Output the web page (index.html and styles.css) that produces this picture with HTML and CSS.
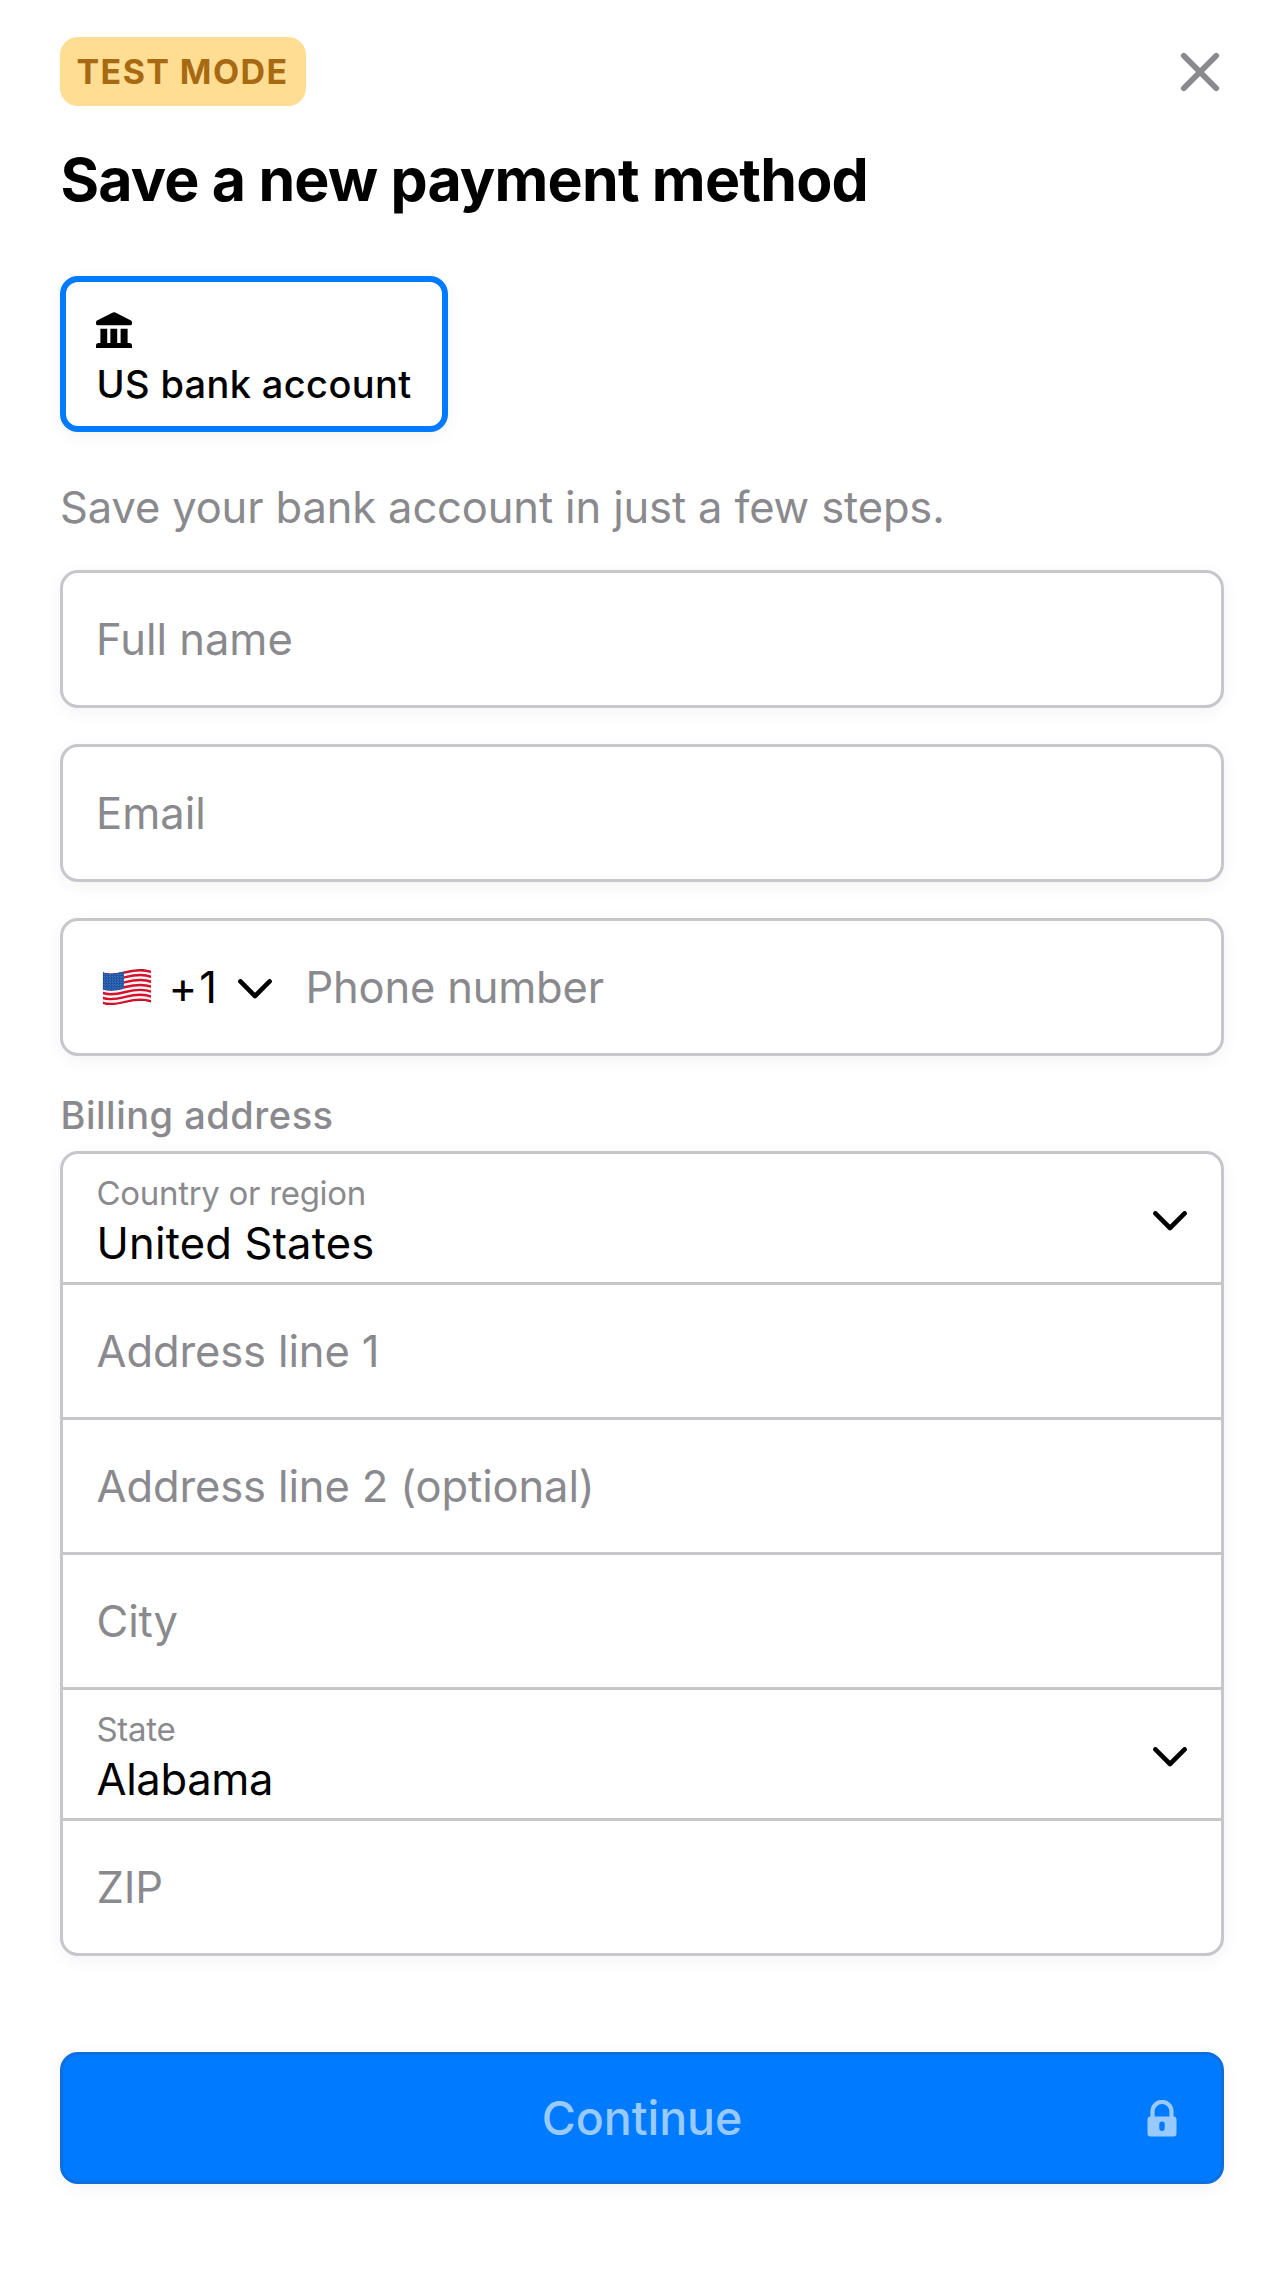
FILE: index.html
```html
<!DOCTYPE html>
<html lang="en">
<head>
<meta charset="utf-8">
<title>Save a new payment method</title>
<link rel="stylesheet" href="styles.css">
</head>
<body>
<main class="sheet">
  <header class="header">
    <span class="badge">TEST MODE</span>
    <button class="close" aria-label="Close">
      <svg width="40" height="40" viewBox="0 0 40 40" fill="none" stroke="#8a8a8e" stroke-width="5.8" stroke-linecap="round"><path d="M3.800 3.800 36.200 36.200M36.200 3.800 3.800 36.200"/></svg>
    </button>
  </header>

  <h1 class="title">Save a new payment method</h1>

  <div class="method">
    <svg class="method-icon" width="36" height="36" viewBox="0 0 36 36"><path d="M16.900.5q1.200-.7 2.400 0L35 8.600q1 .6 1 1.600v1.200q0 1.900-1.800 1.900H1.800Q0 13.300 0 11.400v-1.200q0-1 1-1.600zM4.400 16.800h6.800v14.100h3.200V16.800h6.800v14.100h3.400V16.800h7v14.100h2.300q2.100.4 2.100 2.400V36H0v-2.700q0-2 2.100-2.400h2.300z"/></svg>
    <span class="method-name">US bank account</span>
  </div>

  <p class="intro">Save your bank account in just a few steps.</p>

  <div class="fields">
    <div class="field"><span class="placeholder">Full name</span></div>
    <div class="field"><span class="placeholder">Email</span></div>
    <div class="field phone">
      <svg class="flag" width="50" height="37" viewBox="0 0 150 111">
        <defs>
          <clipPath id="flag-shape"><path d="M2 9C22 17 46 12 70 6S126-3 148 5V101C126 92 94 97 70 102S22 113 2 105z"/></clipPath>
          <pattern id="stars" width="8" height="8" patternUnits="userSpaceOnUse"><circle cx="2" cy="2" r="1.300" fill="#d6e4f5"/><circle cx="6" cy="6" r="1.300" fill="#d6e4f5"/></pattern>
        </defs>
        <g clip-path="url(#flag-shape)">
          <rect width="150" height="111" fill="#f7f7f7"/>
          <g fill="none" stroke="#d8102c" stroke-width="7.400">
            <path id="stripe" d="M2 12.700C22 20.700 46 15.700 70 9.700S126 .7 148 8.700"/>
            <use href="#stripe" y="14.800"/><use href="#stripe" y="29.600"/><use href="#stripe" y="44.400"/><use href="#stripe" y="59.200"/><use href="#stripe" y="74"/><use href="#stripe" y="88.800"/>
          </g>
          <path d="M2 9C22 17 44 13 66 7V59C44 65 22 68 2 61z" fill="#0f4a9e"/>
          <path d="M2 9C22 17 44 13 66 7V59C44 65 22 68 2 61z" fill="url(#stars)"/>
          <path d="M2 9C22 17 46 12 70 6S126-3 148 5V101C126 92 94 97 70 102S22 113 2 105z" fill="none" stroke="#000" stroke-opacity=".2" stroke-width="3"/>
        </g>
      </svg>
      <span class="dial-code">+1</span>
      <svg class="chevron" width="34" height="20" viewBox="0 0 34 20"><path d="M2.400 2.400 17 17 31.600 2.400"/></svg>
      <span class="placeholder phone-placeholder">Phone number</span>
    </div>
  </div>

  <h2 class="section-label">Billing address</h2>
  <div class="group">
    <div class="row select">
      <div class="labelled"><span class="label">Country or region</span><span class="value country">United States</span></div>
      <svg class="chevron" width="34" height="20" viewBox="0 0 34 20"><path d="M2.400 2.400 17 17 31.600 2.400"/></svg>
    </div>
    <div class="row"><span class="placeholder">Address line 1</span></div>
    <div class="row"><span class="placeholder">Address line 2 (optional)</span></div>
    <div class="row"><span class="placeholder">City</span></div>
    <div class="row select">
      <div class="labelled"><span class="label">State</span><span class="value">Alabama</span></div>
      <svg class="chevron" width="34" height="20" viewBox="0 0 34 20"><path d="M2.400 2.400 17 17 31.600 2.400"/></svg>
    </div>
    <div class="row"><span class="placeholder">ZIP</span></div>
  </div>

  <button class="continue">
    <span class="continue-label">Continue</span>
    <svg class="lock" width="30" height="37" viewBox="0 0 30 37"><path d="M5.500 18V11.400a9.500 9.500 0 0 1 19 0V18" fill="none" stroke="#99caff" stroke-width="4.200"/><path fill="#99caff" fill-rule="evenodd" d="M3.500 16.500h23a3 3 0 0 1 3 3v14a3 3 0 0 1-3 3h-23a3 3 0 0 1-3-3v-14a3 3 0 0 1 3-3zM15 21.500a2.700 2.700 0 0 0-2.700 2.700v4a2.700 2.700 0 0 0 5.400 0v-4a2.700 2.700 0 0 0-2.700-2.700z"/></svg>
  </button>
</main>
</body>
</html>
```
FILE: styles.css
```css
* { box-sizing: border-box; }

body {
  margin: 0;
  background: #fff;
  color: #000;
  font-family: Inter, "Liberation Sans", sans-serif;
  font-size: 43.5px;
}

button {
  padding: 0;
  border: 0;
  background: none;
  font-family: inherit;
}

svg { display: block; flex: none; }

.sheet {
  min-height: 2292px;
  padding: 37px 60px 0;
}

.header {
  display: flex;
  align-items: center;
  justify-content: space-between;
  height: 69px;
}

.badge {
  height: 69px;
  width: 246px;
  padding-left: 16.5px;
  border-radius: 18px;
  background: #ffdd93;
  color: #a76a12;
  font-size: 34px;
  font-weight: 650;
  line-height: 69px;
  letter-spacing: 1.4px;
  white-space: nowrap;
}

.close { margin-right: 4px; }

.title {
  margin: 37px 0 60px;
  padding-left: 0.5px;
  font-size: 59px;
  font-weight: 700;
  line-height: 73px;
  letter-spacing: -0.8px;
}

.method {
  display: flex;
  flex-direction: column;
  gap: 12px;
  width: 388px;
  height: 156px;
  padding: 30px 30px 0;
  border: 6px solid #007aff;
  border-radius: 18px;
  box-shadow: 0 4px 18px rgba(0, 0, 0, 0.05);
}

.method-name {
  padding-left: 0.5px;
  font-size: 38px;
  font-weight: 500;
  line-height: 48px;
  letter-spacing: 0.36px;
  white-space: nowrap;
}

.intro {
  margin: 49px 0 37px;
  color: #8a8a8e;
  line-height: 52px;
  letter-spacing: -0.14px;
}

.fields {
  display: flex;
  flex-direction: column;
  gap: 36px;
}

.field {
  display: flex;
  align-items: center;
  height: 138px;
  padding: 0 33px;
  border: 3px solid #c6c6cb;
  border-radius: 18px;
  background: #fff;
  box-shadow: 0 4px 18px rgba(0, 0, 0, 0.05);
}

.field .placeholder { letter-spacing: 0; }

.placeholder {
  color: #8a8a8e;
  line-height: 52px;
  letter-spacing: -0.12px;
}

.phone { padding-left: 38.5px; }

.dial-code {
  margin-left: 17px;
  line-height: 52px;
  letter-spacing: 2px;
}

.phone .chevron { margin: 4px 0 0 19px; }

.field .phone-placeholder {
  margin-left: 33.5px;
  letter-spacing: -0.2px;
}

.chevron {
  fill: none;
  stroke: #000;
  stroke-width: 4.6;
  stroke-linecap: round;
  stroke-linejoin: round;
}

.section-label {
  margin: 36px 0 13px;
  padding-left: 0.5px;
  color: #8a8a8e;
  font-size: 38px;
  font-weight: 500;
  line-height: 46px;
  letter-spacing: 0.5px;
}

.group {
  border: 3px solid #c6c6cb;
  border-radius: 18px;
  background: #fff;
  box-shadow: 0 4px 18px rgba(0, 0, 0, 0.05);
}

.row {
  display: flex;
  align-items: center;
  height: 132px;
  padding: 0 33.5px;
}

.row + .row {
  height: 135px;
  border-top: 3px solid #c6c6cb;
}

.row.select {
  justify-content: space-between;
  height: 128px;
}

.row + .row.select { height: 131px; }

.labelled {
  display: flex;
  flex-direction: column;
  gap: 4px;
  padding-top: 6px;
}

.label {
  color: #8a8a8e;
  font-size: 33px;
  line-height: 40px;
  letter-spacing: -0.3px;
}

.value {
  line-height: 52px;
  letter-spacing: -0.35px;
}

.country { letter-spacing: 0.18px; }

.row .chevron { margin: 5px 0.5px 0 0; }

.continue {
  display: grid;
  grid-template-columns: 1fr auto 1fr;
  align-items: center;
  width: 100%;
  height: 132px;
  margin-top: 96px;
  padding: 0 44.5px;
  border: 3px solid #0d6fdd;
  border-radius: 18px;
  background: #007aff;
  box-shadow: 0 4px 18px rgba(0, 0, 0, 0.05);
}

.continue-label {
  grid-column: 2;
  color: #99caff;
  font-size: 46.5px;
  font-weight: 500;
  line-height: 56px;
  letter-spacing: -0.05px;
}

.lock { justify-self: end; }
```
